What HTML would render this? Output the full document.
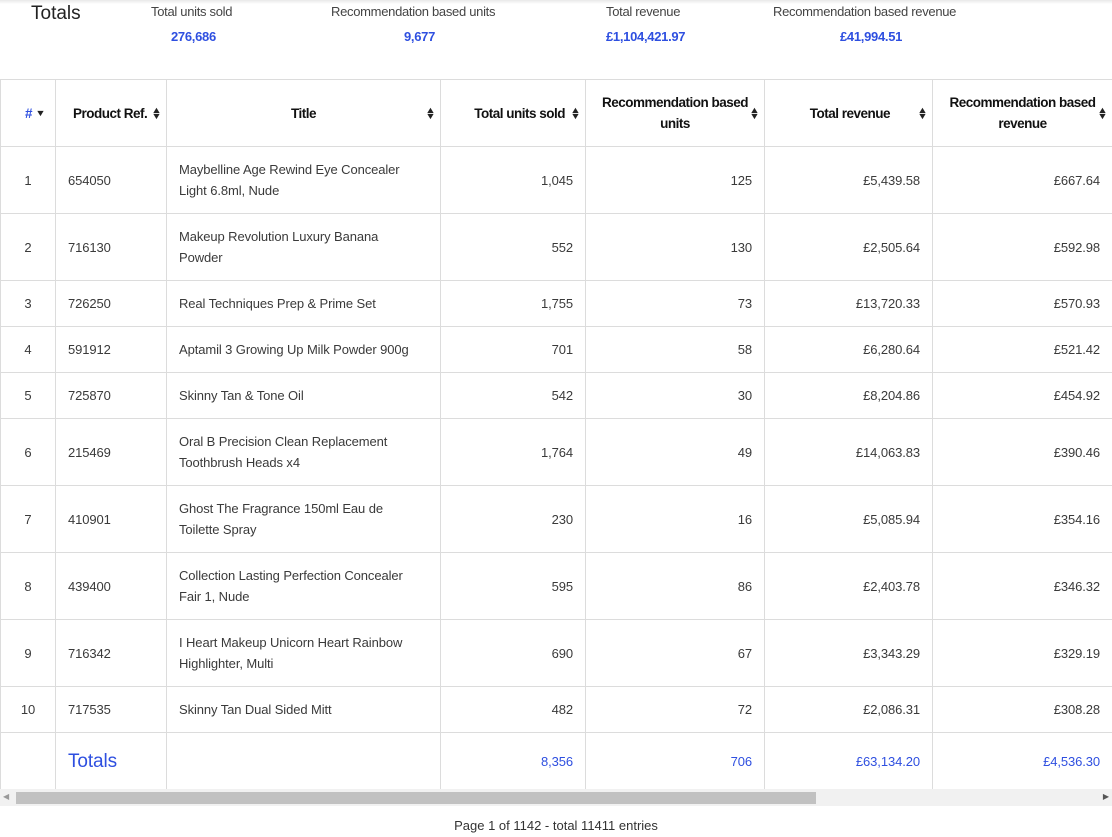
<!DOCTYPE html>
<html><head><meta charset="utf-8"><style>
*{margin:0;padding:0;box-sizing:border-box}
body{width:1112px;height:837px;overflow:hidden;background:#fff;font-family:"Liberation Sans",sans-serif;color:#333;position:relative}
.top{position:absolute;top:0;left:0;width:1112px;height:4px;background:linear-gradient(#e8e8e8,#fff)}
.tl{position:absolute;font-size:13px;color:#444;letter-spacing:-0.3px}
.tv{position:absolute;font-size:13px;font-weight:bold;color:#2e4fe0;letter-spacing:-0.3px}
table{position:absolute;top:79px;left:0;border-collapse:collapse;table-layout:fixed;width:1112px}
td,th{border:1px solid #dcdcdc;font-size:13px;padding:0 12px;letter-spacing:-0.1px}
th{font-weight:bold;color:#111;height:67px;font-size:13.5px;position:relative;line-height:21px;letter-spacing:-0.5px;padding:0 8px}
th .s{position:absolute;right:5px;top:27px;font-size:9px;line-height:6px;color:#222;transform:scaleX(1.2);letter-spacing:0}
td.r{text-align:right}
td.c{text-align:center}
td.t{padding-right:30px}
td{line-height:21px;color:#3a3a3a}
.tot td{color:#2e4fe0;height:57px}
.sb{position:absolute;top:789px;left:0;width:1112px;height:17px;background:#f1f1f1}
.th{position:absolute;top:792px;left:16px;width:800px;height:12px;background:#c1c1c1}
</style></head><body>
<div class="top"></div>
<div style="position:absolute;left:31px;top:3px;font-size:19px;color:#222">Totals</div>
<div class="tl" style="left:151px;top:4px">Total units sold</div>
<div class="tv" style="left:171px;top:29px">276,686</div>
<div class="tl" style="left:331px;top:4px">Recommendation based units</div>
<div class="tv" style="left:404px;top:29px">9,677</div>
<div class="tl" style="left:606px;top:4px">Total revenue</div>
<div class="tv" style="left:606px;top:29px">£1,104,421.97</div>
<div class="tl" style="left:773px;top:4px">Recommendation based revenue</div>
<div class="tv" style="left:840px;top:29px">£41,994.51</div>
<table>
<colgroup><col style="width:55px"><col style="width:111px"><col style="width:274px"><col style="width:145px"><col style="width:179px"><col style="width:168px"><col style="width:180px"></colgroup>
<tr><th style="color:#2e4fe0;text-align:left;padding-left:24px">#<span class="s" style="top:30px;right:10px">▼</span></th><th style="text-align:left;padding-left:17px;white-space:nowrap;overflow:hidden">Product Ref.<span class="s">▲<br>▼</span></th><th>Title<span class="s">▲<br>▼</span></th><th style="text-align:right;padding-right:20px;white-space:nowrap">Total units sold<span class="s">▲<br>▼</span></th><th>Recommendation based units<span class="s">▲<br>▼</span></th><th style="text-align:right;padding-right:42px;white-space:nowrap">Total revenue<span class="s">▲<br>▼</span></th><th>Recommendation based revenue<span class="s">▲<br>▼</span></th></tr>
<tr style="height:67px"><td class="c">1</td><td>654050</td><td class="t">Maybelline Age Rewind Eye Concealer Light 6.8ml, Nude</td><td class="r">1,045</td><td class="r">125</td><td class="r">£5,439.58</td><td class="r">£667.64</td></tr>
<tr style="height:67px"><td class="c">2</td><td>716130</td><td class="t">Makeup Revolution Luxury Banana Powder</td><td class="r">552</td><td class="r">130</td><td class="r">£2,505.64</td><td class="r">£592.98</td></tr>
<tr style="height:46px"><td class="c">3</td><td>726250</td><td class="t">Real Techniques Prep &amp; Prime Set</td><td class="r">1,755</td><td class="r">73</td><td class="r">£13,720.33</td><td class="r">£570.93</td></tr>
<tr style="height:46px"><td class="c">4</td><td>591912</td><td class="t">Aptamil 3 Growing Up Milk Powder 900g</td><td class="r">701</td><td class="r">58</td><td class="r">£6,280.64</td><td class="r">£521.42</td></tr>
<tr style="height:46px"><td class="c">5</td><td>725870</td><td class="t">Skinny Tan &amp; Tone Oil</td><td class="r">542</td><td class="r">30</td><td class="r">£8,204.86</td><td class="r">£454.92</td></tr>
<tr style="height:67px"><td class="c">6</td><td>215469</td><td class="t">Oral B Precision Clean Replacement Toothbrush Heads x4</td><td class="r">1,764</td><td class="r">49</td><td class="r">£14,063.83</td><td class="r">£390.46</td></tr>
<tr style="height:67px"><td class="c">7</td><td>410901</td><td class="t">Ghost The Fragrance 150ml Eau de Toilette Spray</td><td class="r">230</td><td class="r">16</td><td class="r">£5,085.94</td><td class="r">£354.16</td></tr>
<tr style="height:67px"><td class="c">8</td><td>439400</td><td class="t">Collection Lasting Perfection Concealer Fair 1, Nude</td><td class="r">595</td><td class="r">86</td><td class="r">£2,403.78</td><td class="r">£346.32</td></tr>
<tr style="height:67px"><td class="c">9</td><td>716342</td><td class="t">I Heart Makeup Unicorn Heart Rainbow Highlighter, Multi</td><td class="r">690</td><td class="r">67</td><td class="r">£3,343.29</td><td class="r">£329.19</td></tr>
<tr style="height:46px"><td class="c">10</td><td>717535</td><td class="t">Skinny Tan Dual Sided Mitt</td><td class="r">482</td><td class="r">72</td><td class="r">£2,086.31</td><td class="r">£308.28</td></tr>
<tr class="tot"><td></td><td style="font-size:19px;color:#2e4fe0">Totals</td><td></td><td class="r">8,356</td><td class="r">706</td><td class="r">£63,134.20</td><td class="r">£4,536.30</td></tr>
</table>
<div class="sb"></div><div class="th"></div>
<div style="position:absolute;top:792px;left:3px;font-size:8px;color:#999">◀</div>
<div style="position:absolute;top:792px;right:3px;font-size:8px;color:#555">▶</div>
<div style="position:absolute;top:818px;left:0;width:1112px;text-align:center;font-size:13px;color:#333">Page 1 of 1142 - total 11411 entries</div>
</body></html>
